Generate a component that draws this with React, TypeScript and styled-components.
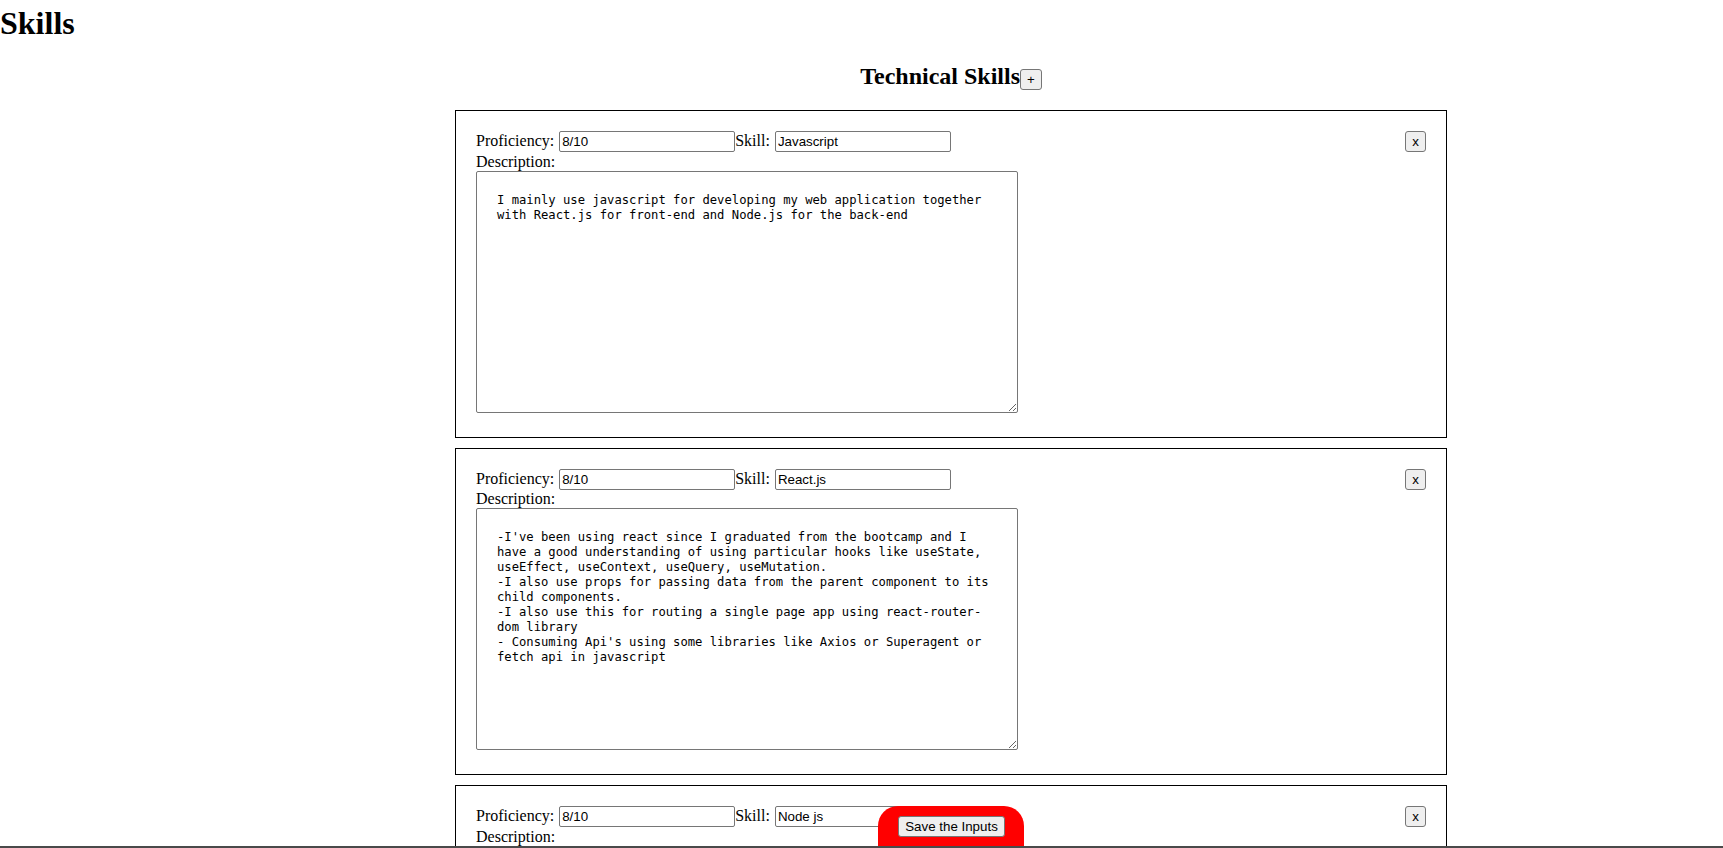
import React from "react";
import styled, { createGlobalStyle } from "styled-components";

const GlobalStyle = createGlobalStyle`
  html {
    scrollbar-width: none;
  }
  body {
    margin: 0;
    background: #ffffff;
    color: #000000;
    font-family: "Liberation Serif", "Times New Roman", serif;
    font-size: 16px;
  }
`;

const PageTitle = styled.h1`
  margin: 5px 0 21.44px;
  font-size: 32px;
  font-weight: bold;
  line-height: normal;
`;

const Section = styled.section`
  margin-left: 455px;
  width: 992px;
  padding-bottom: 60px;
`;

const SectionTitle = styled.h2`
  margin: 19.92px 0;
  text-align: center;
  font-size: 24px;
  font-weight: bold;
`;

const SmallButton = styled.button`
  font-family: "Liberation Sans", Arial, sans-serif;
  font-size: 13.333px;
  line-height: normal;
  padding: 2px 6px;
  color: #000000;
  background: #efefef;
  border: 1px solid #767676;
  border-radius: 3px;
  cursor: pointer;
`;

const Card = styled.div`
  box-sizing: border-box;
  width: 100%;
  display: flex;
  justify-content: space-between;
  align-items: flex-start;
  padding: 20px;
  margin-bottom: 10px;
  border: 1px solid #000000;
`;

const Fields = styled.div`
  display: flex;
  flex-direction: column;
`;

const InputRow = styled.div`
  display: flex;
  align-items: baseline;
  padding-bottom: 0.5px;
`;

const FieldLabel = styled.label`
  white-space: pre;
`;

const TextInput = styled.input`
  box-sizing: border-box;
  width: 176px;
  height: 21px;
  margin-left: 1px;
  padding: 1px 2px;
  font-family: "Liberation Sans", Arial, sans-serif;
  font-size: 13.333px;
  color: #000000;
  border: 1px solid #767676;
  border-radius: 2px;
  background: #ffffff;
`;

const DescriptionLabel = styled.label`
  display: block;
`;

const AreaWrap = styled.div``;

const DescriptionArea = styled.textarea`
  width: 500px;
  height: 200px;
  padding: 21px 20px 19px;
  margin: 0;
  font-family: "DejaVu Sans Mono", "Liberation Mono", monospace;
  font-size: 12.2px;
  line-height: 15px;
  color: #000000;
  border: 1px solid #767676;
  border-radius: 2px;
  background: #ffffff;
`;

const SaveDock = styled.div`
  position: fixed;
  left: 455px;
  bottom: 0;
  width: 992px;
  display: flex;
  justify-content: center;
  z-index: 2;
`;

const SaveBox = styled.div`
  background: #ff0000;
  padding: 10px 19px 11px 20px;
  border-radius: 20px 20px 0 0;
`;

const BottomEdge = styled.div`
  position: fixed;
  left: 0;
  right: 0;
  bottom: 0;
  height: 2px;
  background: #4a4a4a;
  z-index: 3;
`;

type Skill = {
  proficiency: string;
  name: string;
  description: string;
};

const skills: Skill[] = [
  {
    proficiency: "8/10",
    name: "Javascript",
    description:
      "I mainly use javascript for developing my web application together with React.js for front-end and Node.js for the back-end",
  },
  {
    proficiency: "8/10",
    name: "React.js",
    description:
      "-I've been using react since I graduated from the bootcamp and I have a good understanding of using particular hooks like useState, useEffect, useContext, useQuery, useMutation.\n-I also use props for passing data from the parent component to its child components.\n-I also use this for routing a single page app using react-router-dom library\n- Consuming Api's using some libraries like Axios or Superagent or fetch api in javascript",
  },
  {
    proficiency: "8/10",
    name: "Node js",
    description:
      "I use Node.js together with Express.js for building REST APIs and connecting them to databases like MongoDB and PostgreSQL.",
  },
];

function SkillCard({ skill }: { skill: Skill }) {
  return (
    <Card>
      <Fields>
        <InputRow>
          <FieldLabel>
            {"Proficiency: "}
            <TextInput type="text" defaultValue={skill.proficiency} />
          </FieldLabel>
          <FieldLabel>
            {"Skill: "}
            <TextInput type="text" defaultValue={skill.name} />
          </FieldLabel>
        </InputRow>
        <DescriptionLabel>Description:</DescriptionLabel>
        <AreaWrap>
          <DescriptionArea defaultValue={skill.description} />
        </AreaWrap>
      </Fields>
      <SmallButton type="button">x</SmallButton>
    </Card>
  );
}

export default function App() {
  return (
    <>
      <GlobalStyle />
      <PageTitle>Skills</PageTitle>
      <Section>
        <SectionTitle>
          Technical Skills
          <SmallButton type="button">+</SmallButton>
        </SectionTitle>
        {skills.map((s) => (
          <SkillCard key={s.name} skill={s} />
        ))}
      </Section>
      <SaveDock>
        <SaveBox>
          <SmallButton type="button">Save the Inputs</SmallButton>
        </SaveBox>
      </SaveDock>
      <BottomEdge />
    </>
  );
}
